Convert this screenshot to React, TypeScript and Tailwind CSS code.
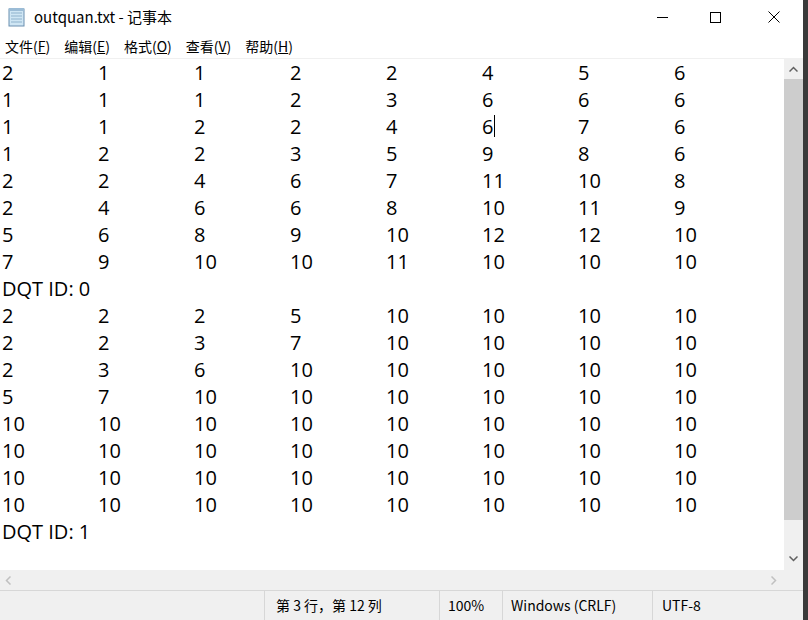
import React from "react";

const block1 = [
  [2,1,1,2,2,4,5,6],[1,1,1,2,3,6,6,6],[1,1,2,2,4,6,7,6],[1,2,2,3,5,9,8,6],
  [2,2,4,6,7,11,10,8],[2,4,6,6,8,10,11,9],[5,6,8,9,10,12,12,10],[7,9,10,10,11,10,10,10],
];
const block2 = [
  [2,2,2,5,10,10,10,10],[2,2,3,7,10,10,10,10],[2,3,6,10,10,10,10,10],[5,7,10,10,10,10,10,10],
  [10,10,10,10,10,10,10,10],[10,10,10,10,10,10,10,10],[10,10,10,10,10,10,10,10],[10,10,10,10,10,10,10,10],
];

function Row({ r, cursor }: { r: number[]; cursor?: boolean }) {
  return (
    <div className="flex h-[27px] items-center">
      {r.map((v, i) => (
        <span key={i} className="w-[96px] shrink-0 relative">
          {v}
          {cursor && i === 5 && <span className="absolute left-[12px] top-[2px] w-px h-[22px] bg-black" />}
        </span>
      ))}
    </div>
  );
}

export default function App() {
  const ui = { fontFamily: '"Noto Sans CJK SC", "Liberation Sans", sans-serif' };
  return (
    <div className="w-[808px] h-[620px] flex bg-[#3a3a3a] overflow-hidden">
      <div className="w-[803px] h-full flex flex-col bg-white" style={ui}>
        <div className="h-[34px] flex items-center shrink-0">
          <svg width="18" height="20" viewBox="0 0 18 20" className="ml-[8px] mr-[8px]">
            <rect x="1" y="2" width="15" height="17" fill="#cfe6f4" stroke="#6a8fb0" />
            <path d="M3 6h11M3 9h11M3 12h11M3 15h11" stroke="#8fb2cc" />
            <rect x="1" y="1" width="15" height="3" fill="#9bbcd6" />
          </svg>
          <span className="text-[15px] text-black">outquan.txt - 记事本</span>
          <div className="ml-auto flex h-full">
            <div className="w-[46px] flex items-center justify-center"><div className="w-[11px] h-px bg-black" /></div>
            <div className="w-[60px] flex items-center justify-center"><div className="w-[11px] h-[11px] border border-black" /></div>
            <div className="w-[58px] flex items-center justify-center">
              <svg width="12" height="12"><path d="M0.5 0.5L11.5 11.5M11.5 0.5L0.5 11.5" stroke="black" /></svg>
            </div>
          </div>
        </div>
        <div className="h-[25px] flex items-center text-[14px] text-black gap-[14px] pl-[5px] shrink-0 border-b border-[#f0f0f0]">
          <span>文件(<u>F</u>)</span><span>编辑(<u>E</u>)</span><span>格式(<u>O</u>)</span><span>查看(<u>V</u>)</span><span>帮助(<u>H</u>)</span>
        </div>
        <div className="flex flex-1 min-h-0">
          <div className="flex-1 pl-[2px] text-[20px] text-black leading-[27px]" style={{ fontFamily: '"Open Sans", "Liberation Sans", sans-serif' }}>
            {block1.map((r, i) => <Row key={i} r={r} cursor={i === 2} />)}
            <div className="h-[27px] flex items-center">DQT ID: 0</div>
            {block2.map((r, i) => <Row key={i} r={r} />)}
            <div className="h-[27px] flex items-center">DQT ID: 1</div>
          </div>
          <div className="w-[19px] bg-[#f0f0f0] flex flex-col items-center">
            <div className="h-[20px] flex items-center justify-center">
              <svg width="9" height="6"><path d="M0.5 5.5L4.5 1.5L8.5 5.5" stroke="#606060" strokeWidth="1.5" fill="none" /></svg>
            </div>
            <div className="w-full h-[441px] bg-[#cdcdcd]" />
            <div className="flex-1" />
            <div className="h-[22px] flex items-center justify-center">
              <svg width="9" height="6"><path d="M0.5 0.5L4.5 4.5L8.5 0.5" stroke="#606060" strokeWidth="1.5" fill="none" /></svg>
            </div>
          </div>
        </div>
        <div className="h-[20px] bg-[#f0f0f0] flex items-center justify-between px-[5px] pr-[26px] shrink-0">
          <svg width="6" height="9"><path d="M5.5 0.5L1.5 4.5L5.5 8.5" stroke="#c0c0c0" strokeWidth="1.5" fill="none" /></svg>
          <svg width="6" height="9"><path d="M0.5 0.5L4.5 4.5L0.5 8.5" stroke="#c0c0c0" strokeWidth="1.5" fill="none" /></svg>
        </div>
        <div className="h-[30px] bg-[#f0f0f0] border-t border-[#d7d7d7] flex text-[14px] text-black shrink-0">
          <div className="w-[265px] border-r border-[#d7d7d7]" />
          <div className="w-[175px] border-r border-[#d7d7d7] pl-[11px] flex items-center">第 3 行，第 12 列</div>
          <div className="w-[63px] border-r border-[#d7d7d7] pl-[8px] flex items-center">100%</div>
          <div className="w-[150px] border-r border-[#d7d7d7] pl-[8px] flex items-center">Windows (CRLF)</div>
          <div className="flex-1 pl-[9px] flex items-center">UTF-8</div>
        </div>
      </div>
    </div>
  );
}
